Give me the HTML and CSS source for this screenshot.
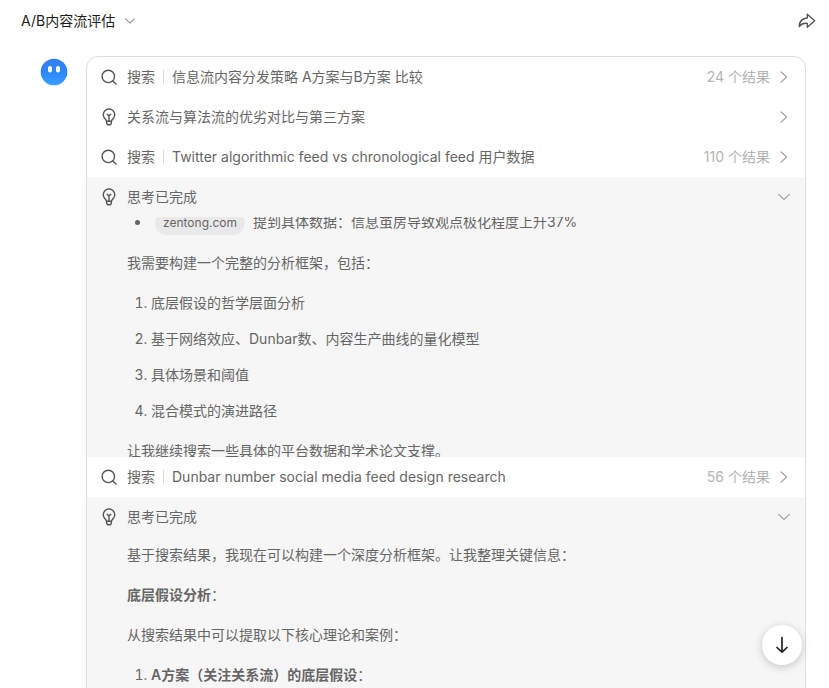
FILE: index.html
```html
<!DOCTYPE html>
<html lang="zh-CN">
<head>
<meta charset="utf-8">
<meta name="viewport" content="width=device-width, initial-scale=1">
<title>A/B内容流评估</title>
<link rel="stylesheet" href="styles.css">
</head>
<body>
<svg class="sprite" aria-hidden="true">
  <symbol id="search" viewBox="0 0 16 16"><circle cx="7.3" cy="7.4" r="6.2"/><path d="M11.8 11.9 15 15"/></symbol>
  <symbol id="bulb" viewBox="0 0 16 18"><path d="M5.6 13.2C5.4 11.6 2.2 10.2 2.2 6.800a5.800 5.800 0 0 1 11.600 0c0 3.400-3.200 4.800-3.400 6.400zM5.600 13.200v1.200a2.400 2.400 0 0 0 4.800 0v-1.200M8 13V8M6.200 6.200 8 8l1.800-1.800"/></symbol>
  <symbol id="right" viewBox="0 0 12 12"><path d="m3 .9 5.6 5.1L3 11.1"/></symbol>
  <symbol id="down" viewBox="0 0 12 12"><path d="m.7 3.4 5.3 5.2 5.3-5.2"/></symbol>
</svg>
<div class="app">
  <header class="topbar">
    <button class="title" type="button">A/B内容流评估<svg class="title-arrow"><use href="#down"/></svg></button>
    <button class="share" type="button" aria-label="分享">
      <svg viewBox="0 0 18 16"><path d="M9.3 1.2 16.7 7.7l-7.4 6.5v-3.8C5.600 10 3.200 11 1.200 13.500 1.400 8.600 4.300 5.300 9.300 5z"/></svg>
    </button>
  </header>
  <main class="chat">
    <svg class="avatar" viewBox="0 0 28 28" role="img" aria-label="助手">
      <defs><linearGradient id="face" x1="0" y1="0" x2="0" y2="1"><stop offset="0" stop-color="#347ff0"/><stop offset=".5" stop-color="#2b86fb"/><stop offset="1" stop-color="#3ba0ff"/></linearGradient></defs>
      <circle cx="14" cy="14" r="13.300" fill="url(#face)"/>
      <rect x="8" y="8" width="4" height="6.500" rx="2" fill="#fff"/><rect x="16" y="8" width="4" height="6.500" rx="2" fill="#fff"/>
    </svg>
    <div class="card">
      <button class="row" type="button">
        <svg class="icon"><use href="#search"/></svg><span class="kind">搜索</span><span class="text">信息流内容分发策略 A方案与B方案 比较</span><span class="count">24 个结果</span><svg class="arrow"><use href="#right"/></svg>
      </button>
      <button class="row" type="button">
        <svg class="icon bulb"><use href="#bulb"/></svg><span class="text">关系流与算法流的优劣对比与第三方案</span><svg class="arrow"><use href="#right"/></svg>
      </button>
      <button class="row" type="button">
        <svg class="icon"><use href="#search"/></svg><span class="kind">搜索</span><span class="text">Twitter algorithmic feed vs chronological feed 用户数据</span><span class="count">110 个结果</span><svg class="arrow"><use href="#right"/></svg>
      </button>
      <section class="thought">
        <button class="row" type="button" aria-expanded="true">
          <svg class="icon bulb"><use href="#bulb"/></svg><span class="text">思考已完成</span><svg class="arrow"><use href="#down"/></svg>
        </button>
        <div class="body scrolled">
          <ul><li><a class="source" href="#">zentong.com</a>提到具体数据：信息茧房导致观点极化程度上升37%</li></ul>
          <p>我需要构建一个完整的分析框架，包括：</p>
          <ol>
            <li>底层假设的哲学层面分析</li>
            <li>基于网络效应、Dunbar数、内容生产曲线的量化模型</li>
            <li>具体场景和阈值</li>
            <li>混合模式的演进路径</li>
          </ol>
          <p>让我继续搜索一些具体的平台数据和学术论文支撑。</p>
        </div>
      </section>
      <button class="row" type="button">
        <svg class="icon"><use href="#search"/></svg><span class="kind">搜索</span><span class="text">Dunbar number social media feed design research</span><span class="count">56 个结果</span><svg class="arrow"><use href="#right"/></svg>
      </button>
      <section class="thought">
        <button class="row" type="button" aria-expanded="true">
          <svg class="icon bulb"><use href="#bulb"/></svg><span class="text">思考已完成</span><svg class="arrow"><use href="#down"/></svg>
        </button>
        <div class="body">
          <p>基于搜索结果，我现在可以构建一个深度分析框架。让我整理关键信息：</p>
          <p><strong>底层假设分析</strong>：</p>
          <p>从搜索结果中可以提取以下核心理论和案例：</p>
          <ol><li><strong>A方案（关注关系流）的底层假设</strong>：</li></ol>
        </div>
      </section>
    </div>
  </main>
  <button class="to-bottom" type="button" aria-label="滚动到底部"><svg viewBox="0 0 16 18"><path d="M8 1.500v14.500M3 11.500l5 4.700 5-4.700"/></svg></button>
</div>
</body>
</html>
```
FILE: styles.css
```css
* { box-sizing: border-box; }
body {
  margin: 0;
  background: #fff;
  color: #666;
  font: 14px/24px Inter, "Noto Sans CJK SC", sans-serif;
}
button {
  margin: 0;
  padding: 0;
  border: 0;
  background: none;
  color: inherit;
  font: inherit;
  text-align: left;
  cursor: pointer;
}
svg {
  flex: none;
  fill: none;
  stroke: currentColor;
  stroke-width: 1.4;
  stroke-linecap: round;
  stroke-linejoin: round;
}
.sprite { position: absolute; width: 0; height: 0; }
.app { display: flex; flex-direction: column; height: 100vh; overflow: hidden; }
.topbar {
  display: flex;
  flex: none;
  align-items: center;
  justify-content: space-between;
  height: 42px;
  padding: 0 13px 0 21px;
}
.title { display: flex; align-items: center; gap: 10px; color: #1c1c1c; }
.title-arrow { width: 10px; height: 10px; color: #999; }
.share { display: flex; color: #555; }
.share svg { width: 18px; height: 16px; }
.chat {
  display: flex;
  flex: 1;
  align-items: flex-start;
  gap: 18px;
  min-height: 0;
  padding: 14px 23px 0 40px;
  overflow: hidden;
}
.avatar { width: 28px; height: 28px; margin-top: 2px; stroke: none; }
.card {
  flex: 1;
  min-width: 0;
  border: 1px solid #dedede;
  border-radius: 12px;
  overflow: hidden;
}
.row {
  display: flex;
  align-items: center;
  width: 100%;
  height: 40px;
  padding: 0 15px 0 14px;
}
.icon { width: 16px; height: 16px; margin-right: 10px; color: #555; }
.bulb { height: 18px; }
.kind { display: flex; align-items: center; }
.kind::after { content: ""; width: 1px; height: 14px; margin: 0 8px; background: #dcdcdc; }
.text {
  flex: 1;
  min-width: 0;
  overflow: hidden;
  white-space: nowrap;
  text-overflow: ellipsis;
}
.count { margin: 0 8px; color: #b4b4b4; }
.arrow { width: 12px; height: 12px; color: #a0a0a0; stroke-width: 1.2; }
.thought { background: #f6f6f6; }
.body { padding: 6px 40px 16px; }
.body p, .body ul, .body ol { margin: 0 0 16px; }
.body ul, .body ol { padding-left: 24px; }
.body li + li { margin-top: 12px; }
.body strong { font-weight: 600; }
.body.scrolled { height: 240px; padding-top: 0; padding-bottom: 0; overflow: hidden; }
.body.scrolled > ul { margin-top: -7px; }
.source {
  display: inline-block;
  margin: 0 8px 0 4px;
  padding: 0 8px;
  border-radius: 12px;
  background: #e9e9e9;
  color: inherit;
  font-size: 12px;
  text-decoration: none;
}
.to-bottom {
  position: fixed;
  right: 27px;
  bottom: 23px;
  display: flex;
  align-items: center;
  justify-content: center;
  width: 40px;
  height: 40px;
  border-radius: 50%;
  background: #fff;
  box-shadow: 0 2px 8px rgb(0 0 0 / 20%);
  color: #222;
}
.to-bottom svg { width: 16px; height: 18px; stroke-width: 1.7; }
```
